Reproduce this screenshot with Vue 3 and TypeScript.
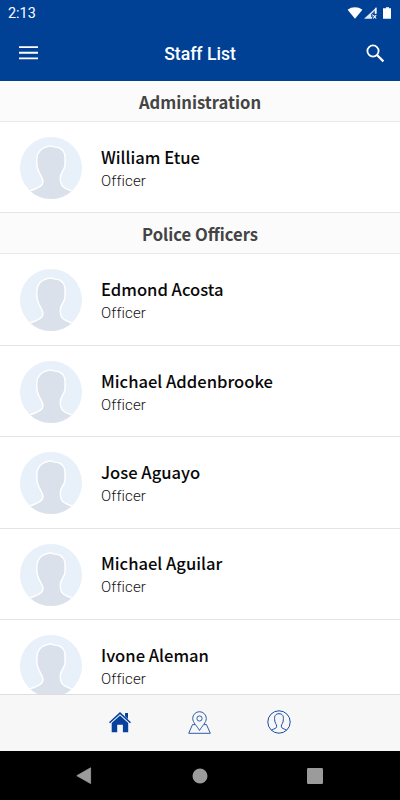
<script setup lang="ts">
interface Person {
  name: string
  role: string
}
interface Group {
  title: string
  people: Person[]
}

const officer = (name: string): Person => ({ name, role: 'Officer' })

const groups: Group[] = [
  { title: 'Administration', people: [officer('William Etue')] },
  {
    title: 'Police Officers',
    people: [
      officer('Edmond Acosta'),
      officer('Michael Addenbrooke'),
      officer('Jose Aguayo'),
      officer('Michael Aguilar'),
      officer('Ivone Aleman'),
    ],
  },
]
</script>

<template>
  <div class="screen">
    <header class="top">
      <div class="status">
        <span class="time">2:13</span>
        <svg class="status-icons" viewBox="0 0 48 16" aria-hidden="true">
          <path d="M.6 4.7C4.9 1.4 11.1 1.4 15.4 4.7L8 13.8Z" fill="#fff" />
          <path d="M29.5 2.2V8.5H26L25 13.7H17Z" fill="#dfe8f8" />
          <path d="M28.8 2.8V9M26.2 10.2L29.2 13.5M29.2 10.2L26.2 13.5" stroke="#fff" stroke-width="1.1" fill="none" />
          <path d="M27.8 5.6V9.2H25.2V12H24V9.200Z" fill="#004195" opacity=".8" />
          <path d="M39 2.2H42V3.3H44V13.4Q44 13.8 43.5 13.8H36.5Q36 13.8 36 13.4V3.3H39Z" fill="#fff" />
        </svg>
      </div>
      <div class="toolbar">
        <button class="icon-button" aria-label="Menu">
          <svg width="20" height="14" viewBox="0 0 20 14"><path d="M0 1.1H19M0 6.8H19M0 12.4H19" stroke="#fff" stroke-width="1.9" /></svg>
        </button>
        <h1>Staff List</h1>
        <button class="icon-button search" aria-label="Search">
          <svg width="19" height="19" viewBox="0 0 19 19" fill="none" stroke="#fff"><circle cx="7" cy="7" r="5.6" stroke-width="1.8" /><path d="M11 11L17.4 17.4" stroke-width="2.2" /></svg>
        </button>
      </div>
    </header>

    <main class="list">
      <section v-for="group in groups" :key="group.title">
        <h2>{{ group.title }}</h2>
        <div v-for="person in group.people" :key="person.name" class="row">
          <svg class="avatar" viewBox="0 0 62 62" aria-hidden="true">
            <path d="M2 58L11.500 53.300C16 51.500 22.900 50 22.900 44.500C22.900 40 18.800 37 17.300 30.500C16.600 26.500 16.300 21.500 17.800 17C20 11.500 26 9.500 31.200 8.800C33 10.500 37 9.700 40.500 11.500C45.500 14.500 45.300 20 45 25C45.600 28 44.500 31.500 42.500 34.500C40.500 37.500 40.200 39 40.300 42C40.500 46.500 41.500 48.500 43.500 50C45.500 51.500 48 52.500 50 53.300L60 58V66H2Z" fill="#dae1eb" stroke="#fff" stroke-width="1.500" />
          </svg>
          <div class="details">
            <div class="name">{{ person.name }}</div>
            <div class="role">{{ person.role }}</div>
          </div>
        </div>
      </section>
    </main>

    <nav class="tabs">
      <button aria-label="Home">
        <svg width="24" height="24" viewBox="0 0 24 24" fill="#06419b"><path d="M1.500 12.700L12 3.100L22.500 12.700" fill="none" stroke="#06419b" stroke-width="1.500" /><path d="M17 2.900H20V9L17 6.300ZM3.700 13L12 5.400L20.200 13V22.200H14.900V14.700H9.200V22.200H3.700Z" /></svg>
      </button>
      <button aria-label="Map">
        <svg width="24" height="24" viewBox="0 0 24 24" fill="none" stroke="#174da3" stroke-width=".9"><path d="M12.500 20.500C10 16 5.700 12.500 5.700 8.500A6.800 6.800 0 0 1 19.300 8.500C19.300 12.500 15 16 12.500 20.500Z" /><circle cx="12.500" cy="8.500" r="2.600" /><path d="M8 14.600H5.500L1.700 23.300H23.300L19.500 14.600H17" /></svg>
      </button>
      <button aria-label="Profile">
        <svg width="24" height="24" viewBox="0 0 24 24" fill="none" stroke="#174da3" stroke-width="1"><circle cx="12" cy="12" r="11.200" /><path d="M4.500 20.200C7 18.600 9.800 18.500 9.700 16.300C9.700 14 7.600 13.200 7.700 9.800C7.100 6 8.500 3.800 12 3.700C15.500 3.800 16.900 6 16.300 9.800C16.400 13.200 14.300 14 14.300 16.300C14.200 18.500 17 18.600 19.500 20.200" /></svg>
      </button>
    </nav>

    <footer class="system">
      <svg width="16" height="18" viewBox="0 0 16 18"><path d="M.8 8.700L14.600.8V16.600Z" fill="#9b9b9b" stroke="#9b9b9b" stroke-width=".8" stroke-linejoin="round" /></svg>
      <svg width="16" height="16" viewBox="0 0 16 16"><circle cx="8" cy="8" r="7.500" fill="#9b9b9b" /></svg>
      <svg width="16" height="16" viewBox="0 0 16 16"><rect width="16" height="16" rx="1.200" fill="#9b9b9b" /></svg>
    </footer>
  </div>
</template>

<style>
body {
  margin: 0;
}
</style>

<style scoped>
.screen {
  display: flex;
  flex-direction: column;
  height: 800px;
  width: 400px;
  overflow: hidden;
  background: #fff;
  font-family: Roboto, sans-serif;
}
button {
  display: flex;
  padding: 0;
  border: 0;
  background: none;
}
.top {
  box-sizing: border-box;
  flex: none;
  height: 81px;
  background: #004195;
  color: #fff;
}
.status {
  display: flex;
  justify-content: space-between;
  align-items: center;
  height: 26px;
  padding: 0 5px 0 8px;
}
.time {
  padding-top: 1px;
  font-size: 14.400px;
  line-height: 26px;
}
.status-icons {
  width: 48px;
  height: 16px;
  padding-bottom: 1px;
}
.toolbar {
  display: flex;
  justify-content: space-between;
  align-items: center;
  height: 53px;
  padding: 0 15px 0 19px;
}
h1 {
  margin: 2px 5px 0 0;
  font-size: 17.600px;
  font-weight: 500;
}
.search {
  padding-top: 1px;
}
.list {
  flex: none;
  height: 613px;
  overflow: hidden;
}
h2 {
  box-sizing: border-box;
  height: 41px;
  margin: 0;
  padding-top: 1px;
  border-bottom: 1px solid #e9e9e9;
  background: #fbfbfb;
  color: #444;
  font: 700 16.600px/41px "Noto Sans CJK SC", sans-serif;
  text-align: center;
}
.row {
  box-sizing: border-box;
  display: flex;
  height: 91.430px;
  padding: 15px 20px;
  gap: 19px;
  border-bottom: 1px solid #e5e5e5;
}
.avatar {
  flex: none;
  width: 62px;
  height: 62px;
  border-radius: 50%;
  background: #e8f0f9;
}
.details {
  padding-top: 6.800px;
}
.name {
  color: #080808;
  font: 500 16.600px/26px "Noto Sans CJK SC", sans-serif;
  white-space: nowrap;
}
.role {
  padding-top: 1px;
  color: #111;
  font-size: 15px;
  font-weight: 300;
  line-height: 20px;
  letter-spacing: 0.15px;
}
.tabs {
  box-sizing: border-box;
  display: flex;
  flex: none;
  align-items: center;
  justify-content: center;
  gap: 55.500px;
  height: 57px;
  padding: 0 2px 2px 0;
  border-top: 1px solid #dedede;
  background: #f7f7f7;
}
.system {
  display: flex;
  align-items: center;
  justify-content: space-between;
  flex: 1;
  padding: 0 77px 0 76px;
  background: #000;
}
</style>
